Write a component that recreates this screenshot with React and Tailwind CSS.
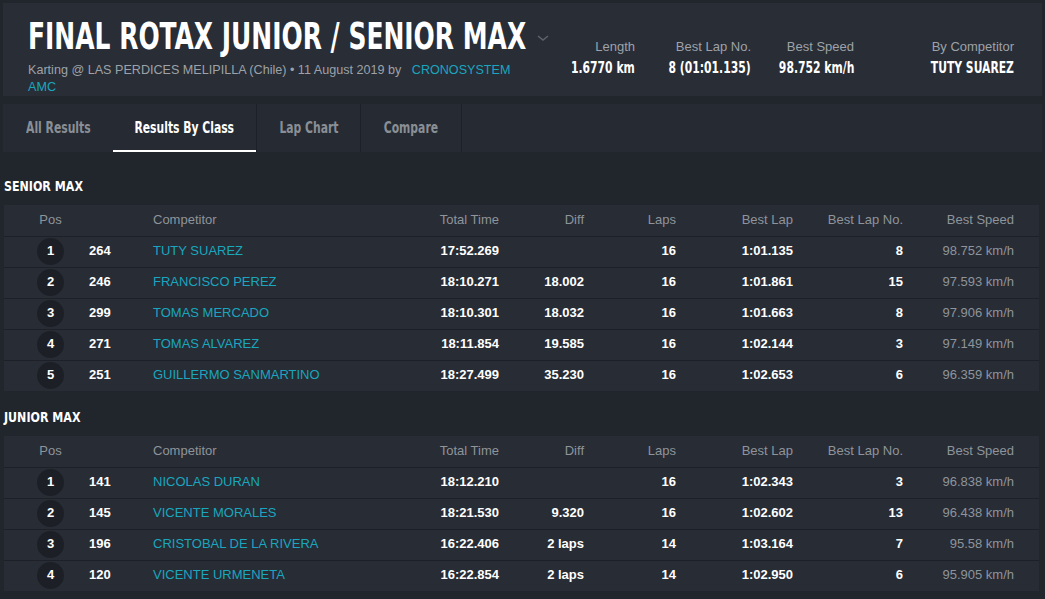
import React from 'react';

const narrow = { fontFamily: '"DejaVu Sans", sans-serif', fontStretch: 'condensed' };

const seniorMax = [
    { pos: 1, no: 264, name: "TUTY SUAREZ", total: "17:52.269", diff: "", laps: 16, best: "1:01.135", bestNo: 8, speed: "98.752 km/h" },
    { pos: 2, no: 246, name: "FRANCISCO PEREZ", total: "18:10.271", diff: "18.002", laps: 16, best: "1:01.861", bestNo: 15, speed: "97.593 km/h" },
    { pos: 3, no: 299, name: "TOMAS MERCADO", total: "18:10.301", diff: "18.032", laps: 16, best: "1:01.663", bestNo: 8, speed: "97.906 km/h" },
    { pos: 4, no: 271, name: "TOMAS ALVAREZ", total: "18:11.854", diff: "19.585", laps: 16, best: "1:02.144", bestNo: 3, speed: "97.149 km/h" },
    { pos: 5, no: 251, name: "GUILLERMO SANMARTINO", total: "18:27.499", diff: "35.230", laps: 16, best: "1:02.653", bestNo: 6, speed: "96.359 km/h" },
];

const juniorMax = [
    { pos: 1, no: 141, name: "NICOLAS DURAN", total: "18:12.210", diff: "", laps: 16, best: "1:02.343", bestNo: 3, speed: "96.838 km/h" },
    { pos: 2, no: 145, name: "VICENTE MORALES", total: "18:21.530", diff: "9.320", laps: 16, best: "1:02.602", bestNo: 13, speed: "96.438 km/h" },
    { pos: 3, no: 196, name: "CRISTOBAL DE LA RIVERA", total: "16:22.406", diff: "2 laps", laps: 14, best: "1:03.164", bestNo: 7, speed: "95.58 km/h" },
    { pos: 4, no: 120, name: "VICENTE URMENETA", total: "16:22.854", diff: "2 laps", laps: 14, best: "1:02.950", bestNo: 6, speed: "95.905 km/h" },
];

// column template shared by header and rows
const cols = "grid grid-cols-[85px_64px_260px_86px_85px_92px_117px_110px_111px] items-center";

function Stat({ label, value }) {
    return (
        <div className="flex flex-col items-end whitespace-nowrap">
            <span className="text-[13px] text-[#9ea2a8] leading-4">{label}</span>
            <span className="text-[15px] font-bold text-white leading-5 mt-[3px] inline-block scale-x-[0.8] origin-right" style={narrow}>{value}</span>
        </div>
    );
}

function ResultTable({ title, rows, first }) {
    return (
        <div className={first ? "mt-[8px]" : ""}>
            <h2 className="h-[45px] px-1 pt-[8px] flex items-center">
                <span className="text-[14px] font-bold text-white inline-block scale-x-[0.88] origin-left" style={narrow}>{title}</span>
            </h2>
            <div className="mx-1 mr-[6px] bg-[#272c35]">
                <div className={`${cols} h-[31px] text-[13px] text-[#8f949b] pb-[2px]`}>
                    <span className="text-center pl-[8px]">Pos</span>
                    <span></span>
                    <span>Competitor</span>
                    <span className="text-right">Total Time</span>
                    <span className="text-right">Diff</span>
                    <span className="text-right">Laps</span>
                    <span className="text-right">Best Lap</span>
                    <span className="text-right">Best Lap No.</span>
                    <span className="text-right">Best Speed</span>
                </div>
                {rows.map((r) => (
                    <div key={r.pos} className={`${cols} h-[31px] border-t border-[#1d2127] text-[13px] pb-[2px]`}>
                        <span className="flex justify-center pl-[8px]">
                            <span className="w-[27px] h-[27px] rounded-full bg-[#1c2026] text-white font-bold text-[13px] flex justify-center pt-[3px]">{r.pos}</span>
                        </span>
                        <span className="text-white font-bold">{r.no}</span>
                        <span className="text-[#1aa6bf]">{r.name}</span>
                        <span className="text-right font-bold text-white">{r.total}</span>
                        <span className="text-right font-bold text-white">{r.diff}</span>
                        <span className="text-right font-bold text-white">{r.laps}</span>
                        <span className="text-right font-bold text-white">{r.best}</span>
                        <span className="text-right font-bold text-white">{r.bestNo}</span>
                        <span className="text-right text-[#8f949b]">{r.speed}</span>
                    </div>
                ))}
            </div>
        </div>
    );
}

function Tab({ label, active, className }) {
    return (
        <div className={`flex items-center justify-center ${active ? "text-white border-b-2 border-white pt-[2px]" : "text-[#8a8f96]"} ${className}`}>
            <span className="inline-block scale-x-[0.8] whitespace-nowrap" style={narrow}>{label}</span>
        </div>
    );
}

export default function App() {
    return (
        <div className="w-[1045px] h-[599px] overflow-hidden bg-[#21252c]" style={{ fontFamily: '"Liberation Sans", Arial, sans-serif' }}>
            <div className="mx-[3px] mt-[3px] h-[93px] bg-[#282d36] flex">
                <div className="pl-[25px] pt-[14px] w-[530px] shrink-0">
                    <div className="flex items-center whitespace-nowrap">
                        <h1 className="w-[499px] text-[37px] font-bold text-white leading-[40px]">
                            <span className="inline-block scale-x-[0.75] origin-left" style={narrow}>FINAL ROTAX JUNIOR / SENIOR MAX</span>
                        </h1>
                        <svg width="14" height="10" viewBox="0 0 14 10" className="ml-[9px] mt-[2px] shrink-0">
                            <path d="M2 3 L7 7 L12 3" stroke="#5d636b" strokeWidth="1.6" fill="none" />
                        </svg>
                    </div>
                    <p className="text-[12.6px] text-[#9ea2a8] leading-[17px] mt-[5px] w-[490px]">
                        Karting @ LAS PERDICES MELIPILLA (Chile) • 11 August 2019 by <span className="text-[#1aa6bf] ml-[7px]">CRONOSYSTEM AMC</span>
                    </p>
                </div>
                <div className="flex pt-[36px] gap-[26px] ml-[32px]">
                    <div className="w-[70px] flex justify-end"><Stat label="Length" value="1.6770 km" /></div>
                    <div className="w-[90px] flex justify-end"><Stat label="Best Lap No." value="8 (01:01.135)" /></div>
                    <div className="w-[77px] flex justify-end"><Stat label="Best Speed" value="98.752 km/h" /></div>
                    <div className="w-[134px] flex justify-end"><Stat label="By Competitor" value="TUTY SUAREZ" /></div>
                </div>
            </div>
            <div className="mx-[3px] mt-[8px] h-[48px] bg-[#262b33] flex text-[15px] font-bold">
                <Tab label="All Results" className="w-[110px]" />
                <Tab label="Results By Class" active className="w-[143px]" />
                <Tab label="Lap Chart" className="w-[104px] border-l border-[#1d2127]" />
                <Tab label="Compare" className="w-[102px] border-l border-r border-[#1d2127]" />
            </div>
            <ResultTable title="SENIOR MAX" rows={seniorMax} first />
            <ResultTable title="JUNIOR MAX" rows={juniorMax} />
        </div>
    );
}
